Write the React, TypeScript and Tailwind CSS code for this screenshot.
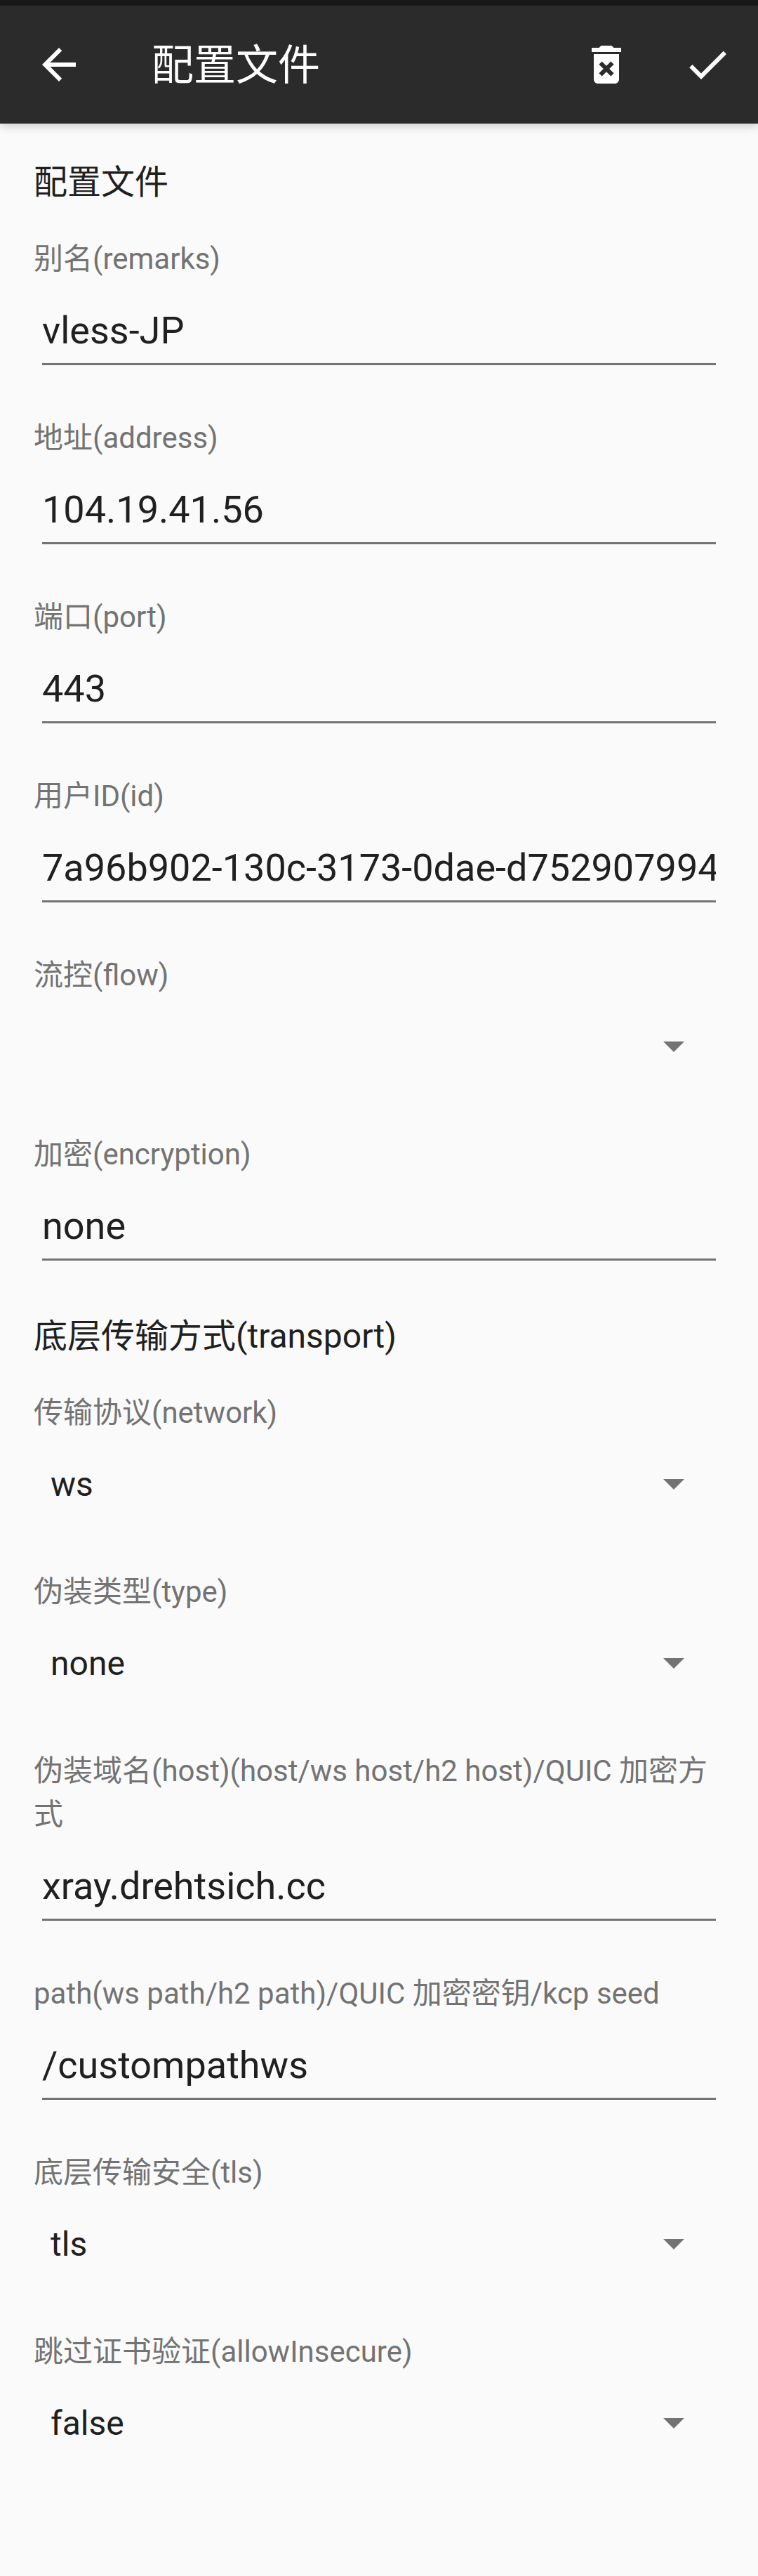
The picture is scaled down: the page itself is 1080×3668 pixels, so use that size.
import { useId } from "react";

type Field = { label: string; value: string; kind: "text" | "select" };
type Section = { title: string; fields: Field[] };

const sections: Section[] = [
  {
    title: "配置文件",
    fields: [
      { label: "别名(remarks)", value: "vless-JP", kind: "text" },
      { label: "地址(address)", value: "104.19.41.56", kind: "text" },
      { label: "端口(port)", value: "443", kind: "text" },
      { label: "用户ID(id)", value: "7a96b902-130c-3173-0dae-d752907994ea", kind: "text" },
      { label: "流控(flow)", value: "", kind: "select" },
      { label: "加密(encryption)", value: "none", kind: "text" },
    ],
  },
  {
    title: "底层传输方式(transport)",
    fields: [
      { label: "传输协议(network)", value: "ws", kind: "select" },
      { label: "伪装类型(type)", value: "none", kind: "select" },
      {
        label: "伪装域名(host)(host/ws host/h2 host)/QUIC 加密方式",
        value: "xray.drehtsich.cc",
        kind: "text",
      },
      {
        label: "path(ws path/h2 path)/QUIC 加密密钥/kcp seed",
        value: "/custompathws",
        kind: "text",
      },
      { label: "底层传输安全(tls)", value: "tls", kind: "select" },
      { label: "跳过证书验证(allowInsecure)", value: "false", kind: "select" },
    ],
  },
];

function Icon({ d }: { d: string }) {
  return (
    <svg viewBox="0 0 24 24" className="size-18" fill="currentColor" aria-hidden="true">
      <path d={d} />
    </svg>
  );
}

function TextField({ label, value }: { label: string; value: string }) {
  const id = useId();
  return (
    <div className="flex flex-col gap-6">
      <label htmlFor={id} className="text-[42px] leading-[62px] text-[#737373]">
        {label}
      </label>
      <input
        id={id}
        type="text"
        defaultValue={value}
        className="mx-3 h-24 rounded-none border-b-[3px] border-[#737373] bg-transparent text-[54px] text-[#202020] outline-none"
      />
    </div>
  );
}

function SelectField({ label, value }: { label: string; value: string }) {
  const id = useId();
  return (
    <div className="flex flex-col gap-6">
      <label htmlFor={id} className="text-[42px] leading-[62px] text-[#737373]">
        {label}
      </label>
      <div className="relative mx-3 flex h-24 items-center pb-[3px]">
        <select
          id={id}
          defaultValue={value}
          className="h-full w-full appearance-none bg-transparent pl-3 text-[48px] text-[#202020] outline-none"
        >
          <option value={value}>{value}</option>
        </select>
        <svg
          viewBox="0 0 10 5"
          className="pointer-events-none absolute right-[45px] w-[30px] fill-[#737373]"
          aria-hidden="true"
        >
          <path d="M0 0h10L5 5z" />
        </svg>
      </div>
    </div>
  );
}

export default function App() {
  return (
    <div className="flex min-h-screen flex-col bg-[#fafafa] font-['Roboto','Noto_Sans_CJK_SC',sans-serif]">
      <header className="relative border-t-8 border-[#171717] bg-[#2b2b2b] text-white shadow-[0_4px_12px_rgba(0,0,0,0.18)]">
        <div className="flex h-42 items-center pr-9 pl-12">
          <button type="button" aria-label="返回">
            <Icon d="M20 11H7.83l5.59-5.59L12 4l-8 8 8 8 1.41-1.41L7.83 13H20v-2z" />
          </button>
          <h1 className="ml-24 flex-1 pt-1 text-[60px]">配置文件</h1>
          <div className="flex gap-18">
            <button type="button" aria-label="删除">
              <Icon d="M6 19c0 1.1.9 2 2 2h8c1.1 0 2-.9 2-2V7H6v12zm2.46-7.12l1.41-1.41L12 12.59l2.12-2.12 1.41 1.41L13.41 14l2.12 2.12-1.41 1.41L12 15.41l-2.12 2.12-1.41-1.41L10.59 14l-2.13-2.12zM15.5 4l-1-1h-5l-1 1H5v2h14V4h-3.5z" />
            </button>
            <button type="button" aria-label="保存">
              <Icon d="M9 16.17L4.83 12l-1.42 1.41L9 19 21 7l-1.41-1.41z" />
            </button>
          </div>
        </div>
      </header>
      <main className="flex flex-col gap-[73px] px-12 pt-[49px] pb-12">
        {sections.map((section) => (
          <section key={section.title}>
            <h2 className="mb-[43px] text-[48px] leading-[70px] text-[#202020]">{section.title}</h2>
            <div className="flex flex-col gap-[73px]">
              {section.fields.map((field) =>
                field.kind === "text" ? (
                  <TextField key={field.label} label={field.label} value={field.value} />
                ) : (
                  <SelectField key={field.label} label={field.label} value={field.value} />
                ),
              )}
            </div>
          </section>
        ))}
      </main>
    </div>
  );
}
